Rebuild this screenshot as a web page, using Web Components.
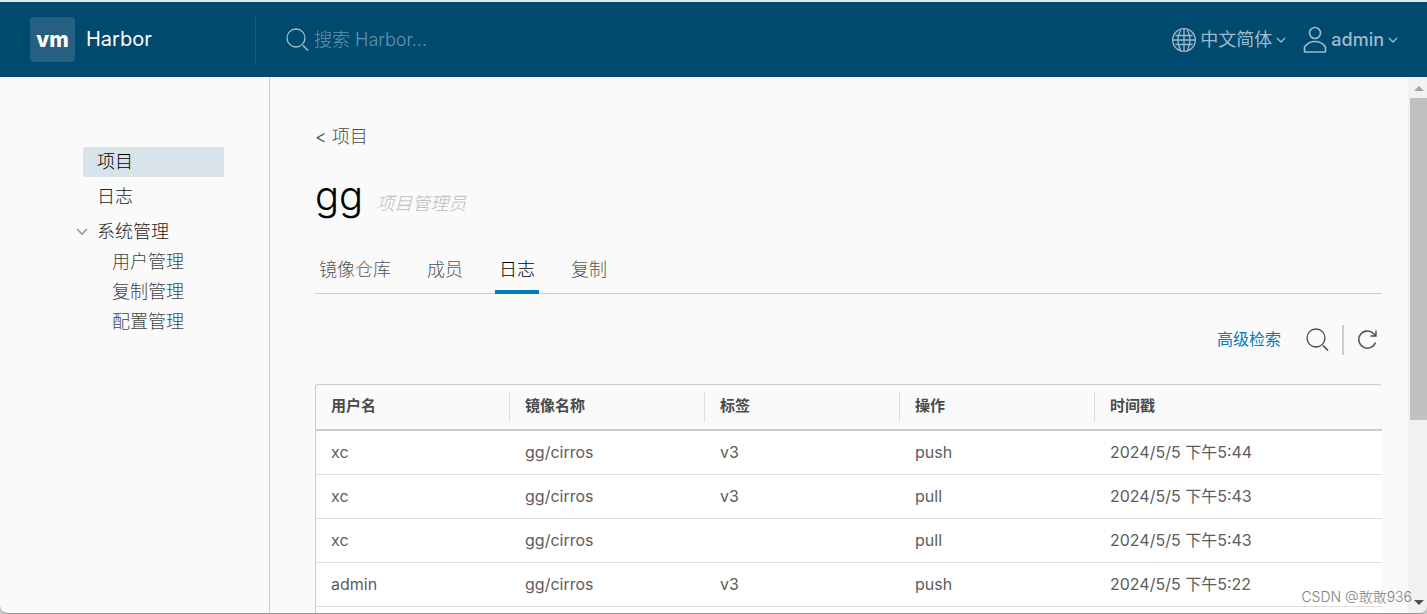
<!DOCTYPE html>
<html lang="zh-CN">
<head>
<meta charset="utf-8">
<title>Harbor</title>
<style>
html, body { margin: 0; height: 100%; background: #c8c8c8; }
body { font-family: Inter, "Noto Sans CJK SC", sans-serif; font-weight: 300; color: #4a4a4a; }
</style>
</head>
<body>
<harbor-app></harbor-app>
<script>
const define = (name, html, setup) => {
  const template = document.createElement('template');
  template.innerHTML = '<style>*{box-sizing:border-box}:host{box-sizing:border-box}button,input,a{font:inherit;color:inherit;text-decoration:none}button{border:0;background:none;padding:0;cursor:pointer}svg{display:block;flex:none}</style>' + html;
  customElements.define(name, class extends HTMLElement {
    constructor() {
      super();
      this.attachShadow({ mode: 'open' }).append(template.content.cloneNode(true));
    }
    connectedCallback() { if (setup) setup(this, this.shadowRoot); }
  });
};

const icons = {
  search: '<svg width="24" height="24" viewBox="0 0 24 24" fill="none" stroke="currentColor" stroke-width="1.3"><circle cx="10" cy="10" r="9"/><path d="M17 17.500l5 5" stroke-width="1.700"/></svg>',
  globe: '<svg width="24" height="24" viewBox="1 1 24 24" fill="none" stroke="currentColor" stroke-width="1.300"><circle cx="13" cy="13" r="11.300"/><path d="M13 1.500v23M4.500 8.500h17M4.500 17.500h17M2 13h22M10 2.500C6 9 6 17 10 24M16 2.500c4 6.500 4 15 0 21.500"/></svg>',
  user: '<svg width="24" height="28" viewBox="0 0 24 28" fill="none" stroke="currentColor" stroke-width="1.600"><circle cx="12" cy="7" r="5.500"/><path d="M1.500 25.500v-4.500C4 17.500 8 15.500 12 15.500s8 2 10.500 5.500v4.500q0 .5-.5.5H2q-.5 0-.5-.5z"/></svg>',
  refresh: '<svg width="22" height="22" viewBox="0 0 22 22" fill="none" stroke="currentColor" stroke-width="1.400"><path d="M18.500 13.500A8.600 8.600 0 1 1 16.500 4.500l2.500 2.500M19 1.500V7H13.500"/></svg>',
  caret: '<svg width="10" height="8" viewBox="0 0 10 8" fill="none" stroke="currentColor" stroke-width="1.300"><path d="M1 2l4 4 4-4"/></svg>',
  chevron: '<svg width="12" height="8" viewBox="0 0 12 8" fill="none" stroke="currentColor" stroke-width="1.700"><path d="M1 1l5 5 5-5"/></svg>'
};
customElements.define('hb-icon', class extends HTMLElement {
  connectedCallback() {
    if (this.shadowRoot) return;
    this.attachShadow({ mode: 'open' }).innerHTML = '<style>:host{display:block;flex:none}svg{display:block}</style>' + icons[this.getAttribute('name')];
  }
});

define('hb-header', `
<style>
:host { display: flex; align-items: center; height: 77px; flex: none; background: #004a70; border-top: 2px solid #e4e9ec; color: #9fbaca; padding-right: 29px; font-size: 18px; font-weight: 400; }
.brand { display: flex; align-items: center; gap: 11px; width: 256px; height: 50px; padding-left: 30px; border-right: 1px solid #1a5c7f; color: #fff; font-size: 20px; }
.logo { display: grid; place-items: center; width: 45px; height: 45px; border-radius: 4px; background: #265f80; font-size: 21px; font-weight: 800; line-height: 43px; }
.name { line-height: 24px; padding-bottom: 2px; }
.search { display: flex; align-items: center; gap: 4px; flex: 1; margin-left: 30px; }
input { flex: 1; min-width: 0; border: 0; outline: 0; padding: 0; background: none; color: #fff; font-weight: 300; }
input::placeholder { color: #6495ae; opacity: 1; }
button { display: flex; align-items: center; gap: 4px; line-height: 28px; white-space: nowrap; }
nav { display: flex; gap: 17px; }
.user { font-weight: 500; }
</style>
<a class="brand" href="#"><span class="logo">vm</span><span class="name">Harbor</span></a>
<label class="search"><hb-icon name="search"></hb-icon><input type="text" aria-label="搜索" placeholder="搜索 Harbor..."></label>
<nav>
<button type="button"><hb-icon name="globe"></hb-icon>中文简体<hb-icon name="caret"></hb-icon></button>
<button type="button" class="user"><hb-icon name="user"></hb-icon>admin<hb-icon name="caret"></hb-icon></button>
</nav>`);

define('hb-nav-link', `
<style>
:host { display: block; font-size: 18px; line-height: 30px; color: #222; }
a { display: block; padding-left: 14px; border-radius: 3px 0 0 3px; }
:host([active]) a { background: #d9e4ea; color: #000; }
:host([sub]) a { padding-left: 29px; color: #444; }
</style><a href="#"><slot></slot></a>`);

define('hb-sidebar', `
<style>
:host { display: flex; flex-direction: column; gap: 5px; width: 270px; flex: none; padding: 70px 45px 0 83px; border-right: 1px solid #ccc; }
.group { font-size: 18px; line-height: 30px; color: #222; }
.group button { display: flex; align-items: center; gap: 9px; margin-left: -7px; }
hb-icon { color: #9a9a9a; }
</style>
<hb-nav-link active>项目</hb-nav-link>
<hb-nav-link>日志</hb-nav-link>
<div class="group"><button type="button" aria-expanded="true"><hb-icon name="chevron"></hb-icon>系统管理</button>
<hb-nav-link sub>用户管理</hb-nav-link><hb-nav-link sub>复制管理</hb-nav-link><hb-nav-link sub>配置管理</hb-nav-link></div>`);

define('hb-tab', `
<style>
:host { display: block; }
button { display: block; height: 44px; padding: 0 4px; border-bottom: 4px solid transparent; font-size: 18px; line-height: 40px; color: #555; }
:host([active]) button { color: #000; border-color: #007cbb; }
</style><button type="button" role="tab"><slot></slot></button>`);

define('hb-tabs', `
<style>
:host { display: flex; gap: 28px; height: 44px; box-shadow: inset 0 -1px #ccc; }
</style><slot></slot>`);

define('hb-toolbar', `
<style>
:host { display: flex; align-items: center; justify-content: flex-end; height: 30px; padding-right: 3px; }
.advanced { font-size: 16px; line-height: 24px; padding-bottom: 2px; font-weight: 400; color: #007cbb; margin-right: 25px; }
.refresh { height: 30px; margin-left: 12px; padding-left: 13px; border-left: 2px solid #ccc; }
</style>
<button type="button" class="advanced">高级检索</button>
<button type="button" aria-label="搜索"><hb-icon name="search"></hb-icon></button>
<button type="button" class="refresh" aria-label="刷新"><hb-icon name="refresh"></hb-icon></button>`);

const logs = [
  ['xc', 'gg/cirros', 'v3', 'push', '2024/5/5 下午5:44'],
  ['xc', 'gg/cirros', 'v3', 'pull', '2024/5/5 下午5:43'],
  ['xc', 'gg/cirros', '', 'pull', '2024/5/5 下午5:43'],
  ['admin', 'gg/cirros', 'v3', 'push', '2024/5/5 下午5:22'],
  ['', '', '', '', '']
];
define('hb-log-table', `
<style>
:host { display: block; border: 1px solid #ccc; border-right: 0; border-bottom: 0; border-radius: 3px 3px 0 0; }
table { width: 100%; table-layout: fixed; border-collapse: separate; border-spacing: 0; text-align: left; }
col { width: 195px; } col:first-child { width: 193px; } col:last-child { width: auto; }
th { padding: 7px 0; border-bottom: 2px solid #ccc; font-size: 15px; font-weight: 700; line-height: 28px; }
th span { display: block; height: 30px; padding-left: 15px; border-left: 1px solid #ddd; }
th:first-child span { border-left: 0; }
td { height: 44px; padding: 0 0 2px 16px; background: #fff; border-bottom: 1px solid #ddd; font-size: 16px; font-weight: 400; line-height: 24px; color: #5c5c5c; }
td:first-child { padding-left: 15px; }
</style>
<table><colgroup><col><col><col><col><col></colgroup>
<thead><tr><th><span>用户名</span></th><th><span>镜像名称</span></th><th><span>标签</span></th><th><span>操作</span></th><th><span>时间戳</span></th></tr></thead>
<tbody></tbody></table>`, (host, root) => {
  const body = root.querySelector('tbody');
  body.replaceChildren(...logs.map(row => {
    const tr = document.createElement('tr');
    row.forEach(value => { tr.insertCell().textContent = value; });
    return tr;
  }));
});

define('hb-scrollbar', `
<style>
:host { display: flex; flex-direction: column; align-items: center; width: 19px; flex: none; padding: 9px 0 8px 2px; background: #f1f1f1; }
.up, .down { border: 5px solid transparent; border-top: 0; border-bottom: 5px solid #a3a3a3; }
.thumb { width: 100%; height: 62%; margin-top: 7px; background: #c1c1c1; }
.down { margin-top: auto; border-top: 5px solid #505050; border-bottom: 0; }
</style><span class="up"></span><span class="thumb"></span><span class="down"></span>`);

define('harbor-app', `
<style>
:host { position: relative; display: flex; flex-direction: column; height: 100vh; overflow: hidden; background: #fafafa; border-bottom: 1px solid #999; border-radius: 0 0 8px 8px; }
.body { display: flex; flex: 1; min-height: 0; }
main { flex: 1; min-width: 0; overflow: hidden; padding: 45px 26px 0 45px; }
.back { display: block; font-size: 18px; line-height: 30px; }
h1 { display: flex; align-items: baseline; gap: 13px; margin: 16px 0 26px; font-size: 40px; line-height: 56px; font-weight: 300; color: #000; }
.role { font-size: 18px; line-height: 30px; font-style: italic; color: #bbb; }
hb-toolbar { margin: 31px 0 29px; }
.mark { position: absolute; right: 15px; bottom: 6px; font-size: 14px; line-height: 20px; color: #808080; }
</style>
<hb-header></hb-header>
<div class="body">
<hb-sidebar></hb-sidebar>
<main>
<a class="back" href="#">&lt; 项目</a>
<h1>gg<span class="role">项目管理员</span></h1>
<hb-tabs role="tablist"><hb-tab>镜像仓库</hb-tab><hb-tab>成员</hb-tab><hb-tab active>日志</hb-tab><hb-tab>复制</hb-tab></hb-tabs>
<hb-toolbar></hb-toolbar>
<hb-log-table></hb-log-table>
</main>
<hb-scrollbar></hb-scrollbar>
</div>
<span class="mark">CSDN @敢敢936</span>`);
</script>
</body>
</html>
